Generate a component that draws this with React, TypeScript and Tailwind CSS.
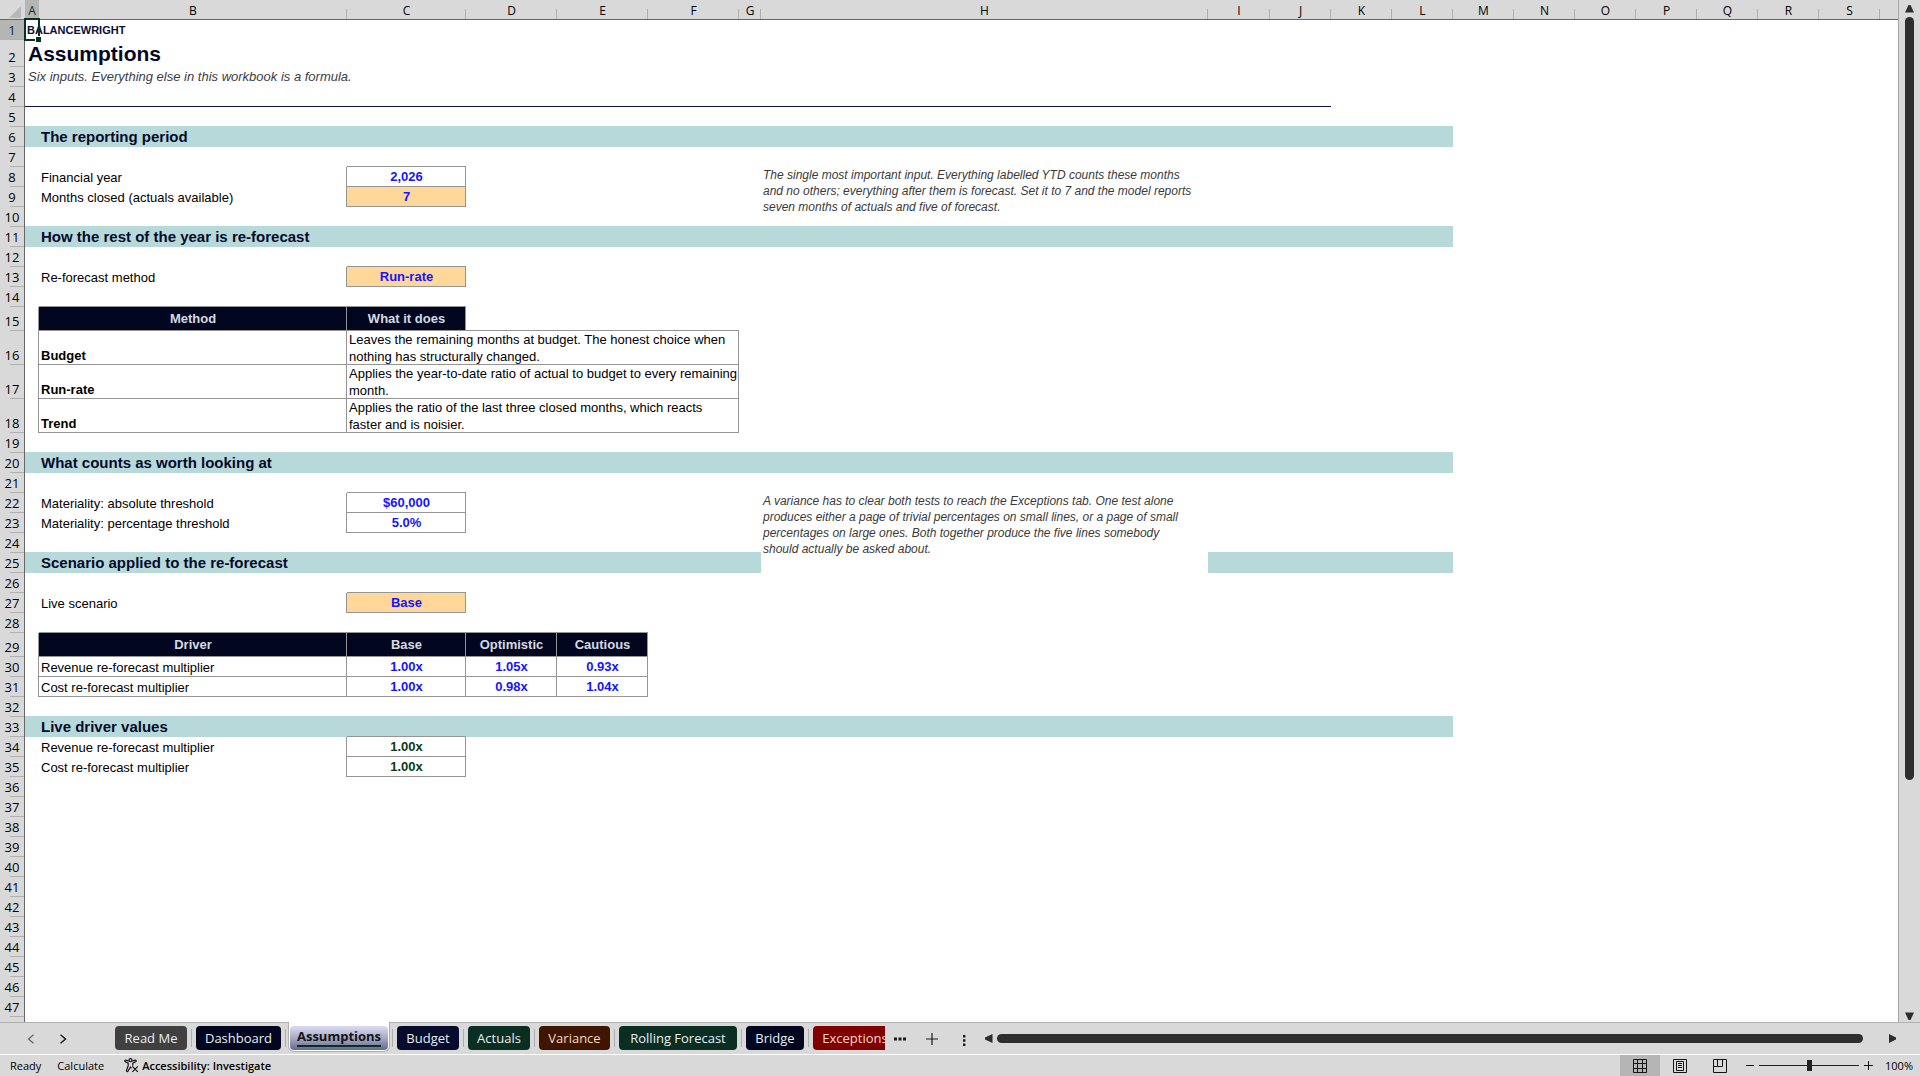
import React from 'react';

const columns = [
  { name: 'A', width: 'w-[14px]' },
  { name: 'B', width: 'w-[308px]' },
  { name: 'C', width: 'w-[119px]' },
  { name: 'D', width: 'w-[91px]' },
  { name: 'E', width: 'w-[91px]' },
  { name: 'F', width: 'w-[91px]' },
  { name: 'G', width: 'w-[22px]' },
  { name: 'H', width: 'w-[447px]' },
  { name: 'I', width: 'w-[62px]' },
  { name: 'J', width: 'w-[61px]' },
  { name: 'K', width: 'w-[61px]' },
  { name: 'L', width: 'w-[61px]' },
  { name: 'M', width: 'w-[61px]' },
  { name: 'N', width: 'w-[61px]' },
  { name: 'O', width: 'w-[61px]' },
  { name: 'P', width: 'w-[61px]' },
  { name: 'Q', width: 'w-[61px]' },
  { name: 'R', width: 'w-[61px]' },
  { name: 'S', width: 'w-[61px]' },
];

// Grid lines sit on the last pixel of the neighbouring cell above and to the left
const box = 'shadow-[inset_-1px_-1px_0_#959595,-1px_0_0_#959595,0_-1px_0_#959595]';

const Gap = ({ span = 1 }: { span?: number }) => <td colSpan={span}></td>;

const Label = ({ children, boxed, bold }: { children: React.ReactNode; boxed?: boolean; bold?: boolean }) => (
  <td className={`pl-0.5 align-bottom leading-[18px] text-black ${bold ? 'font-bold' : ''} ${boxed ? box : ''}`}>
    {children}
  </td>
);

const Value = ({ children, picker, live }: { children: React.ReactNode; picker?: boolean; live?: boolean }) => (
  <td
    className={`${box} text-center align-top font-bold ${picker ? 'bg-[#ffd899]' : 'bg-white'} ${
      live ? 'text-[#0b3a14]' : 'text-[#1414ff]'
    }`}
  >
    {children}
  </td>
);

const Head = ({ children }: { children: React.ReactNode }) => (
  <th className={`${box} bg-[#02071f] text-center font-bold text-[#d5dae2]`}>{children}</th>
);

const Band = ({ children, span = 12 }: { children?: React.ReactNode; span?: number }) => (
  <td colSpan={span} className="bg-[#b8d9da] pl-4 text-[15px] font-bold text-[#050a2c] shadow-[0_-1px_0_#b8d9da]">
    {children}
  </td>
);

const Note = ({ children, rows }: { children: React.ReactNode; rows: number }) => (
  <td rowSpan={rows} className="whitespace-pre bg-white pl-0.5 align-top text-[12px] italic leading-4 text-[#3a3a3a]">
    {children}
  </td>
);

const Description = ({ children }: { children: React.ReactNode }) => (
  <td colSpan={4} className={`${box} whitespace-pre pl-0.5 leading-[17px] text-black`}>
    {children}
  </td>
);

const cells: Record<number, React.ReactNode> = {
  1: (
    <td colSpan={8} className="relative pl-0.5 text-[11px] font-bold text-[#0a1038]">
      BALANCEWRIGHT
      <span className="absolute -left-px -top-0.5 h-[23px] w-4 border-2 border-[#0b3022]">
        <span className="absolute -bottom-[3px] -right-[3px] h-[6px] w-[6px] border-l border-t border-white bg-[#0b3022]"></span>
      </span>
    </td>
  ),
  2: (
    <td colSpan={8} className="pl-[3px] text-[#020726]">
      <h1 className="text-[21px] font-bold leading-[27px]">Assumptions</h1>
    </td>
  ),
  3: (
    <td colSpan={8} className="pl-[3px] italic text-[#3c3c44]">
      Six inputs. Everything else in this workbook is a formula.
    </td>
  ),
  4: <td colSpan={10} className="border-b border-[#0d1240]"></td>,
  6: <Band>The reporting period</Band>,
  8: (
    <>
      <Gap />
      <Label>Financial year</Label>
      <Value>2,026</Value>
      <Gap span={4} />
      <Note rows={3}>
        {'The single most important input. Everything labelled YTD counts these months\nand no others; everything after them is forecast. Set it to 7 and the model reports\nseven months of actuals and five of forecast.'}
      </Note>
    </>
  ),
  9: (
    <>
      <Gap />
      <Label>Months closed (actuals available)</Label>
      <Value picker>7</Value>
    </>
  ),
  11: <Band>How the rest of the year is re-forecast</Band>,
  13: (
    <>
      <Gap />
      <Label>Re-forecast method</Label>
      <Value picker>Run-rate</Value>
    </>
  ),
  15: (
    <>
      <Gap />
      <Head>Method</Head>
      <Head>What it does</Head>
    </>
  ),
  16: (
    <>
      <Gap />
      <Label boxed bold>Budget</Label>
      <Description>{'Leaves the remaining months at budget. The honest choice when\nnothing has structurally changed.'}</Description>
    </>
  ),
  17: (
    <>
      <Gap />
      <Label boxed bold>Run-rate</Label>
      <Description>{'Applies the year-to-date ratio of actual to budget to every remaining\nmonth.'}</Description>
    </>
  ),
  18: (
    <>
      <Gap />
      <Label boxed bold>Trend</Label>
      <Description>{'Applies the ratio of the last three closed months, which reacts\nfaster and is noisier.'}</Description>
    </>
  ),
  20: <Band>What counts as worth looking at</Band>,
  22: (
    <>
      <Gap />
      <Label>Materiality: absolute threshold</Label>
      <Value>$60,000</Value>
      <Gap span={4} />
      <Note rows={4}>
        {'A variance has to clear both tests to reach the Exceptions tab. One test alone\nproduces either a page of trivial percentages on small lines, or a page of small\npercentages on large ones. Both together produce the five lines somebody\nshould actually be asked about.'}
      </Note>
    </>
  ),
  23: (
    <>
      <Gap />
      <Label>Materiality: percentage threshold</Label>
      <Value>5.0%</Value>
    </>
  ),
  25: (
    <>
      <Band span={7}>Scenario applied to the re-forecast</Band>
      <Band span={4} />
    </>
  ),
  27: (
    <>
      <Gap />
      <Label>Live scenario</Label>
      <Value picker>Base</Value>
    </>
  ),
  29: (
    <>
      <Gap />
      <Head>Driver</Head>
      <Head>Base</Head>
      <Head>Optimistic</Head>
      <Head>Cautious</Head>
    </>
  ),
  30: (
    <>
      <Gap />
      <Label boxed>Revenue re-forecast multiplier</Label>
      <Value>1.00x</Value>
      <Value>1.05x</Value>
      <Value>0.93x</Value>
    </>
  ),
  31: (
    <>
      <Gap />
      <Label boxed>Cost re-forecast multiplier</Label>
      <Value>1.00x</Value>
      <Value>0.98x</Value>
      <Value>1.04x</Value>
    </>
  ),
  33: <Band>Live driver values</Band>,
  34: (
    <>
      <Gap />
      <Label>Revenue re-forecast multiplier</Label>
      <Value live>1.00x</Value>
    </>
  ),
  35: (
    <>
      <Gap />
      <Label>Cost re-forecast multiplier</Label>
      <Value live>1.00x</Value>
    </>
  ),
};

const rowHeight: Record<number, string> = {
  2: 'h-[27px]',
  15: 'h-6',
  16: 'h-[34px]',
  17: 'h-[34px]',
  18: 'h-[34px]',
  29: 'h-6',
};

const tabs = [
  { name: 'Read Me', style: 'w-[72px] bg-[#404040]' },
  { name: 'Dashboard', style: 'w-[85px] bg-[#02071f]' },
  { name: 'Assumptions', style: 'w-[98px]', active: true },
  { name: 'Budget', style: 'w-[62px] bg-[#070c2c]' },
  { name: 'Actuals', style: 'w-[62px] bg-[#0a2e22]' },
  { name: 'Variance', style: 'w-[71px] bg-[#401500] text-[#f5d9c4]' },
  { name: 'Rolling Forecast', style: 'w-[118px] bg-[#0a2e22]' },
  { name: 'Bridge', style: 'w-[58px] bg-[#02071f]' },
  { name: 'Exceptions', style: 'w-[84px] bg-[#800000] text-[#ffd9c9]' },
];

const Sheet = () => (
  <div className="min-w-0 flex-1 overflow-hidden border-r border-[#a6a6a6] bg-white">
    <table className="w-full table-fixed border-separate border-spacing-0 font-['Liberation_Sans',sans-serif] text-[13px] leading-5">
      <colgroup>
        <col className="w-[25px]" />
        {columns.map((col) => (
          <col key={col.name} className={col.width} />
        ))}
        <col />
      </colgroup>
      <thead>
        <tr className="h-5 bg-[#d9d9d9] font-['Open_Sans',sans-serif] text-[12px] leading-[15px] text-black">
          <td className="border-b border-[#666]">
            <svg className="ml-[9px] mt-1 block" width="13" height="12" viewBox="0 0 13 12">
              <path d="M12 0v12H0z" fill="#b8b8b8" />
            </svg>
          </td>
          {columns.map((col) => (
            <th
              key={col.name}
              scope="col"
              className={`border-b border-[#666] bg-[linear-gradient(#b0b0b0,#b0b0b0)] bg-[length:1px_10px] bg-right-bottom bg-no-repeat pt-0.5 font-medium ${
                col.name === 'A' ? 'bg-[#b5b5b5] text-[#0b3022]' : ''
              }`}
            >
              {col.name}
            </th>
          ))}
          <td className="border-b border-[#666]"></td>
        </tr>
      </thead>
      <tbody>
        {Array.from({ length: 47 }, (_, i) => i + 1).map((n) => (
          <tr key={n} className={rowHeight[n] ?? 'h-5'}>
            <th
              scope="row"
              className={`border-r border-[#666] bg-[linear-gradient(#b0b0b0,#b0b0b0)] bg-[length:14px_1px] bg-right-bottom bg-no-repeat align-bottom font-['Open_Sans',sans-serif] font-medium ${
                n === 1 ? 'bg-[#b5b5b5] text-[#0b3022]' : 'bg-[#d9d9d9] text-black'
              }`}
            >
              {n}
            </th>
            {cells[n]}
          </tr>
        ))}
        <tr className="h-5">
          <th className="border-r border-[#666] bg-[#d9d9d9]"></th>
        </tr>
      </tbody>
    </table>
  </div>
);

const VerticalScroll = () => (
  <div className="flex w-[21px] shrink-0 flex-col items-center gap-1 pb-0.5 pt-[5px]">
    <button aria-label="Scroll up">
      <svg className="block" width="9" height="8" viewBox="0 0 9 8"><path d="M3.5 0h2L9 7.5H0z" fill="#2e2e2e" /></svg>
    </button>
    <div className="flex w-full flex-1 justify-center">
      <div className="h-[77%] w-[9px] rounded-full bg-[#2e2e2e]"></div>
    </div>
    <button aria-label="Scroll down">
      <svg className="block" width="9" height="8" viewBox="0 0 9 8"><path d="M0 0.5h9L5.5 8h-2z" fill="#2e2e2e" /></svg>
    </button>
  </div>
);

const TabBar = () => (
  <div className="flex h-8 items-center border-t border-[#b0b0b0] text-[13px] text-[#e9edf2]">
    <button aria-label="Previous sheet" className="ml-[27px]">
      <svg className="block" width="8" height="10" viewBox="0 0 8 10" fill="none" stroke="#666" strokeWidth="1.3"><path d="M6.5 0.7 1.5 5l5 4.3" /></svg>
    </button>
    <button aria-label="Next sheet" className="ml-6">
      <svg className="block" width="8" height="10" viewBox="0 0 8 10" fill="none" stroke="#1a1a1a" strokeWidth="1.5"><path d="m1.5 0.7 5 4.3-5 4.3" /></svg>
    </button>
    <div className="-mt-px ml-12 flex h-8 w-[770px] items-center overflow-hidden">
      {tabs.map((tab, i) => (
        <React.Fragment key={tab.name}>
          {i > 0 && <span className="mx-1 h-[18px] w-px shrink-0 bg-[#adadad]"></span>}
          {tab.active ? (
            <div className="-mx-0.5 h-[30px] shrink-0 self-start rounded-b-md border-x border-b border-[#b0b0b0] bg-white px-px pt-1">
              <button
                className={`${tab.style} flex h-6 flex-col items-center rounded-sm bg-linear-to-b from-[#dcdcf4] via-[#a9aac2] to-[#626a90] pt-px font-bold leading-[18px] text-[#141414]`}
              >
                <span className="border-b-2 border-[#0b3022]">{tab.name}</span>
              </button>
            </div>
          ) : (
            <button className={`${tab.style} h-6 shrink-0 whitespace-nowrap rounded pt-0.5`}>{tab.name}</button>
          )}
        </React.Fragment>
      ))}
    </div>
    <button aria-label="More sheets" className="ml-[9px]">
      <svg className="block" width="12" height="4" viewBox="0 0 12 4" fill="#1a1a1a"><path d="M0 0.5h3v3H0zM4.5 0.5h3v3h-3zM9 0.5h3v3H9z" /></svg>
    </button>
    <button aria-label="New sheet" className="ml-5">
      <svg className="block" width="12" height="12" viewBox="0 0 12 12" stroke="#1a1a1a" strokeWidth="1.2"><path d="M6 0v12M0 6h12" /></svg>
    </button>
    <button aria-label="Resize tabs" className="ml-[25px] mt-1">
      <svg className="block" width="3" height="11" viewBox="0 0 3 11" fill="#1a1a1a"><path d="M0 0h2.4v2.4H0zM0 4.3h2.4v2.4H0zM0 8.6h2.4V11H0z" /></svg>
    </button>
    <button aria-label="Scroll left" className="ml-[19px]">
      <svg className="block" width="8" height="9" viewBox="0 0 8 9"><path d="M7.5 0v9L0 5.5v-2z" fill="#2e2e2e" /></svg>
    </button>
    <div className="ml-1 mr-[26px] h-[9px] flex-1 rounded-full bg-[#2e2e2e]"></div>
    <button aria-label="Scroll right" className="mr-6">
      <svg className="block" width="7" height="9" viewBox="0 0 7 9"><path d="M0 0l7 3.5v2L0 9z" fill="#2e2e2e" /></svg>
    </button>
  </div>
);

const StatusBar = () => (
  <div className="flex h-[22px] items-center border-t border-white text-[11px] leading-5 text-black">
    <span className="ml-2.5">Ready</span>
    <span className="ml-4">Calculate</span>
    <button className="ml-5 flex items-center gap-[3px] font-semibold">
      <svg width="15" height="15" viewBox="0 0 15 15" fill="none" stroke="#141414" strokeWidth="1.2">
        <circle cx="6.5" cy="2.2" r="1.5" />
        <path d="M5 3 1.8 2.1Q.4 2.3 1 3.5l3.2 1.6v2.6L2.4 12.6q.3 1.4 1.5.8L6.5 9l1 1.4M8 3l3.2-.9q1.4.2.8 1.4L8.8 5.1v2.6" />
        <path d="m8.4 8.4 5.4 5.4M13.8 8.4l-5.4 5.4" />
      </svg>
      Accessibility: Investigate
    </button>
    <button aria-label="Normal view" className="ml-auto flex h-full w-10 items-center justify-center bg-[#b5b5b5]">
      <svg width="14" height="14" viewBox="0 0 14 14" fill="none" stroke="#141414"><path d="M.5.5h13v13H.5zM.5 4.5h13M.5 9.5h13M4.5.5v13M9.5.5v13" /></svg>
    </button>
    <button aria-label="Page layout" className="flex h-full w-10 items-center justify-center">
      <svg width="14" height="14" viewBox="0 0 14 14" fill="none" stroke="#141414"><path d="M.5.5h13v13H.5zM3.5 2.5h7v9h-7zM5 4.5h4M5 6.5h4M5 8.5h4" /></svg>
    </button>
    <button aria-label="Page break preview" className="flex h-full w-10 items-center justify-center">
      <svg width="14" height="14" viewBox="0 0 14 14" fill="none" stroke="#141414"><path d="M.5.5h13v13H.5zM4.5.5v7h5v-7M.5 7.5h4" /></svg>
    </button>
    <button aria-label="Zoom out" className="ml-1.5">
      <svg className="block" width="8" height="9" viewBox="0 0 8 9" stroke="#141414"><path d="M0 4.5h8" /></svg>
    </button>
    <input
      type="range"
      aria-label="Zoom"
      defaultValue={50}
      className="mx-[5px] h-4 w-[100px] appearance-none bg-[linear-gradient(#222,#222)] bg-[length:100%_1px] bg-center bg-no-repeat [&::-webkit-slider-thumb]:h-[11px] [&::-webkit-slider-thumb]:w-[5px] [&::-webkit-slider-thumb]:appearance-none [&::-webkit-slider-thumb]:bg-[#222]"
    />
    <button aria-label="Zoom in">
      <svg className="block" width="9" height="9" viewBox="0 0 9 9" stroke="#141414"><path d="M4.5 0v9M0 4.5h9" /></svg>
    </button>
    <button className="ml-3 mr-[7px]">100%</button>
  </div>
);

export default function App() {
  return (
    <div className="flex h-screen flex-col overflow-hidden bg-[#d9d9d9] font-['Open_Sans',sans-serif]">
      <main className="flex min-h-0 flex-1">
        <Sheet />
        <VerticalScroll />
      </main>
      <TabBar />
      <StatusBar />
    </div>
  );
}
